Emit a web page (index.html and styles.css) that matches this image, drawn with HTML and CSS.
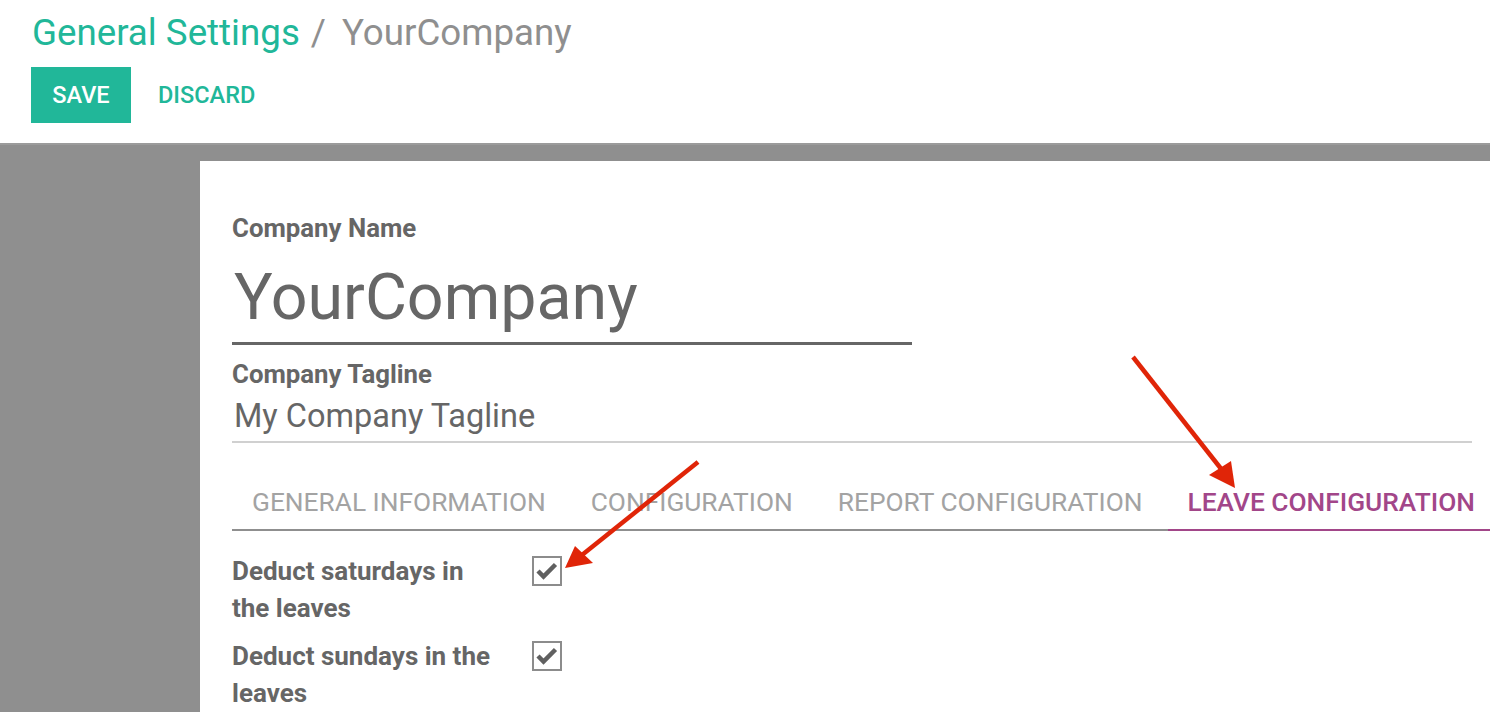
FILE: index.html
```html
<!DOCTYPE html>
<html lang="en">
<head>
<meta charset="utf-8">
<title>General Settings</title>
<link rel="stylesheet" href="styles.css">
</head>
<body>
<div class="page">
  <header class="control-panel">
    <h1 class="breadcrumb"><span class="crumb-link">General Settings</span><span class="crumb-sep">/</span><span class="crumb-current">YourCompany</span></h1>
    <div class="buttons">
      <button class="btn-save">SAVE</button>
      <button class="btn-discard">DISCARD</button>
    </div>
  </header>
  <main class="backdrop">
    <section class="sheet">
      <div class="field-label">Company Name</div>
      <div class="name-input">YourCompany</div>
      <div class="field-label tagline-label">Company Tagline</div>
      <div class="tagline-input">My Company Tagline</div>
      <nav class="tabs">
        <div class="tab">GENERAL INFORMATION</div>
        <div class="tab">CONFIGURATION</div>
        <div class="tab">REPORT CONFIGURATION</div>
        <div class="tab active">LEAVE CONFIGURATION</div>
      </nav>
      <div class="options">
        <div class="opt-label">Deduct saturdays in the leaves</div>
        <div class="checkbox"><svg viewBox="0 0 26 26" width="26" height="26"><polyline points="4,13 9.5,18.5 21.5,6.5" fill="none" stroke="#606060" stroke-width="4.5" stroke-linecap="butt" stroke-linejoin="miter"/></svg></div>
        <div class="opt-label">Deduct sundays in the leaves</div>
        <div class="checkbox"><svg viewBox="0 0 26 26" width="26" height="26"><polyline points="4,13 9.5,18.5 21.5,6.5" fill="none" stroke="#606060" stroke-width="4.5" stroke-linecap="butt" stroke-linejoin="miter"/></svg></div>
      </div>
    </section>
  </main>
  <svg class="annotations" width="1490" height="712" viewBox="0 0 1490 712">
    <line x1="698" y1="462" x2="582" y2="555" stroke="#e02508" stroke-width="4.5"/>
    <polygon points="565,568 575,546 593,563" fill="#e02508"/>
    <line x1="1133" y1="357" x2="1222" y2="470" stroke="#e02508" stroke-width="4.5"/>
    <polygon points="1235,488 1209,475 1231,461" fill="#e02508"/>
  </svg>
</div>
</body>
</html>
```

FILE: styles.css
```css
html, body {
  margin: 0;
  padding: 0;
  width: 1490px;
  height: 712px;
  overflow: hidden;
  background: #ffffff;
  font-family: Roboto, "Liberation Sans", sans-serif;
}

.page {
  position: relative;
  width: 1490px;
  height: 712px;
  display: flex;
  flex-direction: column;
}

.control-panel {
  box-sizing: border-box;
  height: 143px;
  padding: 12px 0 0 32px;
  background: #ffffff;
  flex: none;
}

.breadcrumb {
  margin: 0;
  font-size: 36.7px;
  line-height: 42px;
  font-weight: 400;
  white-space: nowrap;
}

.crumb-link {
  color: #21b799;
}

.crumb-sep {
  color: #8f8f8f;
  margin: 0 16px 0 11px;
}

.crumb-current {
  color: #8f8f8f;
}

.buttons {
  display: flex;
  align-items: center;
  margin-top: 13px;
  margin-left: -1px;
}

.btn-save {
  height: 56px;
  width: 100px;
  border: none;
  background: #21b799;
  color: #ffffff;
  font-family: inherit;
  font-size: 23.5px;
  font-weight: 500;
  padding: 0;
  cursor: pointer;
}

.btn-discard {
  height: 56px;
  border: none;
  background: transparent;
  color: #21b799;
  font-family: inherit;
  font-size: 23.5px;
  font-weight: 500;
  padding: 0;
  margin-left: 27px;
  cursor: pointer;
}

.backdrop {
  flex: 1;
  background: #8f8f8f;
  border-top: 2px solid #9b9b9b;
  padding: 16px 0 0 200px;
  min-height: 0;
}

.sheet {
  box-sizing: border-box;
  background: #ffffff;
  height: 100%;
  padding: 53px 0 0 32px;
  color: #666666;
}

.field-label {
  font-size: 25.8px;
  line-height: 28px;
  font-weight: 700;
  color: #666666;
  white-space: nowrap;
}

.name-input {
  width: 680px;
  box-sizing: border-box;
  margin-top: 19px;
  padding: 0 0 9px 2px;
  font-size: 64.5px;
  line-height: 72px;
  color: #666666;
  border-bottom: 3px solid #666666;
}

.tagline-label {
  margin-top: 15px;
}

.tagline-input {
  width: 1240px;
  box-sizing: border-box;
  margin-top: 10px;
  padding: 0 0 7px 2px;
  font-size: 32.5px;
  line-height: 36px;
  color: #666666;
  border-bottom: 2px solid #d0d0d0;
}

.tabs {
  display: flex;
  gap: 5px;
  width: 1240px;
  margin-top: 22px;
  border-bottom: 2px solid #8f8f8f;
  white-space: nowrap;
}

.tab {
  flex: none;
  padding: 22px 20px 12px 20px;
  font-size: 26.3px;
  line-height: 30px;
  font-weight: 400;
  color: #a3a3a3;
  margin-bottom: -2px;
  border-bottom: 2px solid transparent;
}

.tab.active {
  color: #a24689;
  font-weight: 500;
  border-bottom-color: #a24689;
}

.options {
  display: grid;
  grid-template-columns: 266px 30px;
  column-gap: 34px;
  row-gap: 11px;
  margin-top: 22px;
}

.opt-label {
  font-size: 26px;
  line-height: 37px;
  font-weight: 700;
  color: #666666;
}

.checkbox {
  box-sizing: border-box;
  width: 30px;
  height: 30px;
  margin-top: 3px;
  border: 2px solid #8c8c8c;
  display: flex;
  align-items: center;
  justify-content: center;
  background: #ffffff;
}

.annotations {
  position: absolute;
  top: 0;
  left: 0;
  pointer-events: none;
}
```
